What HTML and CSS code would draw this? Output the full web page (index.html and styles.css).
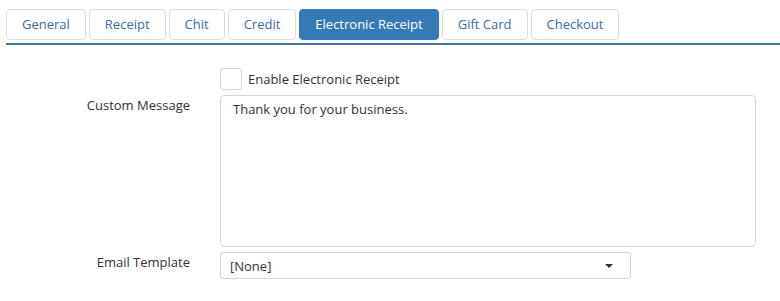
FILE: index.html
```html
<!DOCTYPE html>
<html lang="en">
<head>
    <meta charset="UTF-8">
    <title>Settings</title>
    <link rel="stylesheet" href="styles.css">
</head>
<body>

    <ul class="tabs">
        <li class="tab">General</li>
        <li class="tab">Receipt</li>
        <li class="tab">Chit</li>
        <li class="tab">Credit</li>
        <li class="tab active">Electronic Receipt</li>
        <li class="tab">Gift Card</li>
        <li class="tab">Checkout</li>
    </ul>

    <div class="form">
        <div class="row check-row">
            <div class="label"></div>
            <label class="check">
                <span class="box"></span>
                Enable Electronic Receipt
            </label>
        </div>

        <div class="row">
            <div class="label msg-label">Custom Message</div>
            <div class="textarea">Thank you for your business.</div>
        </div>

        <div class="row select-row">
            <div class="label tpl-label">Email Template</div>
            <div class="select">
                <span>[None]</span>
                <span class="caret"></span>
            </div>
        </div>
    </div>

</body>
</html>
```

FILE: styles.css
```css
body {
    font-family: "Open Sans", sans-serif;
    font-size: 13px;
    margin: 0;
    padding: 0;
    background-color: #fff;
    color: #333;
}

.tabs {
    list-style: none;
    display: flex;
    gap: 3px;
    margin: 0 0 0 6px;
    padding: 9px 0 3px 0;
    border-bottom: 2px solid #3a76a6;
}

.tab {
    height: 29px;
    line-height: 29px;
    padding: 0 15px;
    border: 1px solid #dcdcdc;
    border-radius: 4px;
    color: #3d6c99;
}

.tab.active {
    background-color: #337ab7;
    border-color: #337ab7;
    color: #fff;
}

.form {
    padding-top: 22px;
}

.row {
    display: grid;
    grid-template-columns: 190px auto;
    column-gap: 30px;
    align-items: start;
}

.label {
    text-align: right;
    color: #333;
}

.check-row {
    height: 28px;
}

.check {
    display: flex;
    align-items: center;
    gap: 6px;
    height: 23px;
}

.box {
    width: 20px;
    height: 20px;
    border: 1px solid #d4d4d4;
    border-radius: 3px;
}

.msg-label {
    padding-top: 1px;
}

.textarea {
    width: 510px;
    height: 138px;
    padding: 4px 12px 8px 12px;
    border: 1px solid #d4d4d4;
    border-radius: 4px;
}

.select-row {
    margin-top: 5px;
}

.tpl-label {
    padding-top: 1px;
}

.select {
    width: 400px;
    height: 25px;
    padding: 0 0 0 9px;
    border: 1px solid #d4d4d4;
    border-radius: 3px;
    display: flex;
    align-items: center;
    justify-content: space-between;
}

.caret {
    width: 0;
    height: 0;
    margin-right: 17px;
    border-left: 4px solid transparent;
    border-right: 4px solid transparent;
    border-top: 4px solid #333;
}
```
